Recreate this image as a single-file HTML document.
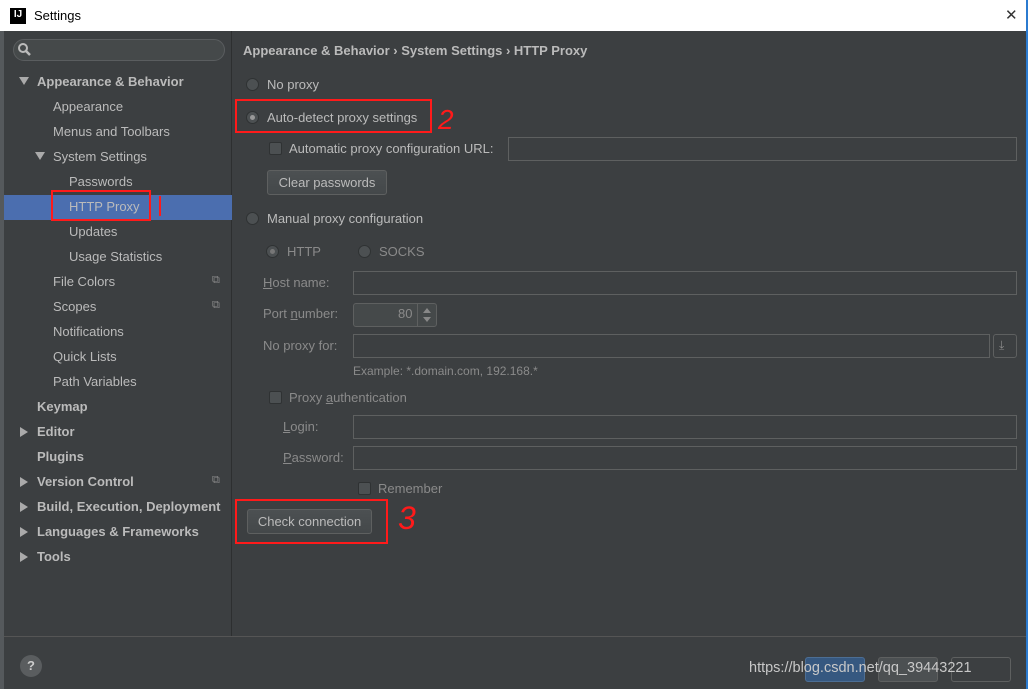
<!DOCTYPE html>
<html><head><meta charset="utf-8"><style>
*{box-sizing:border-box;margin:0;padding:0}
body{width:1028px;height:689px;background:#3c3f41;font-family:"Liberation Sans",sans-serif;font-size:13px;color:#bbbbbb;position:relative;overflow:hidden}
.a{position:absolute;white-space:nowrap}
.title{left:0;top:0;width:1028px;height:31px;background:#fff;border-right:2px solid #2b7bd0}
.side{left:4px;top:31px;width:228px;height:605px;background:#3c3f41;border-right:1px solid #2d2f30}
.main{left:233px;top:31px;width:793px;height:605px;background:#3c3f41}
.bot{left:4px;top:636px;width:1022px;height:53px;background:#3c3f41;border-top:1px solid #555}
.rb{position:absolute;right:0;top:0;width:2px;height:689px;background:#2b7bd0}
.lb{left:0;top:31px;width:4px;height:658px;background:#55595c}
.b{font-weight:bold}
.inp{position:absolute;border:1px solid #5e6060;background:#45494a;height:24px}
.radio{position:absolute;width:13px;height:13px;border-radius:50%;background:#4c5052;border:1px solid #2f3233}
.cb{position:absolute;width:13px;height:13px;background:#4c5052;border:1px solid #2f3233;border-radius:2px}
.btn{position:absolute;height:25px;border:1px solid #5e6060;border-radius:3px;background:linear-gradient(#4c5052,#44484a);color:#bbb;text-align:center;line-height:23px}
.red{position:absolute;border:2px solid #ff1a1a}
.tri{position:absolute;width:0;height:0}
.dim{color:#8a8a8a}
</style></head><body>
<div class="a title"></div>
<div class="a" style="left:10px;top:8px;width:16px;height:16px;background:#000;color:#fff;font-size:10px;font-weight:bold;text-align:center;line-height:14px">IJ</div>
<div class="a" style="left:34px;top:8px;color:#000;font-size:13px">Settings</div>
<div class="a" style="left:1005px;top:6px;color:#333;font-size:15px;font-weight:300">✕</div>
<div class="a lb"></div>
<div class="a side"></div>
<div class="a main"></div>
<div class="a bot"></div>
<div class="rb"></div>

<div class="a" style="left:13px;top:39px;width:212px;height:22px;border:1px solid #5a5d5f;border-radius:11px;background:#45494a"></div>
<svg class="a" style="left:17px;top:42px" width="16" height="16"><circle cx="6" cy="6" r="4" stroke="#bbb" stroke-width="2" fill="none"/><line x1="9" y1="9" x2="13" y2="13" stroke="#bbb" stroke-width="2.5"/></svg>

<div class="a" style="left:4px;top:195px;width:228px;height:25px;background:#4b6eaf"></div>
<div class="tri" style="left:19px;top:77px;border-left:5px solid transparent;border-right:5px solid transparent;border-top:8px solid #aaa"></div>
<div class="a b" style="left:37px;top:74px">Appearance &amp; Behavior</div>
<div class="a" style="left:53px;top:99px">Appearance</div>
<div class="a" style="left:53px;top:124px">Menus and Toolbars</div>
<div class="tri" style="left:35px;top:152px;border-left:5px solid transparent;border-right:5px solid transparent;border-top:8px solid #aaa"></div>
<div class="a" style="left:53px;top:149px">System Settings</div>
<div class="a" style="left:69px;top:174px">Passwords</div>
<div class="a" style="left:69px;top:199px">HTTP Proxy</div>
<div class="a" style="left:69px;top:224px">Updates</div>
<div class="a" style="left:69px;top:249px">Usage Statistics</div>
<div class="a" style="left:53px;top:274px">File Colors</div>
<div class="a" style="left:53px;top:299px">Scopes</div>
<div class="a" style="left:53px;top:324px">Notifications</div>
<div class="a" style="left:53px;top:349px">Quick Lists</div>
<div class="a" style="left:53px;top:374px">Path Variables</div>
<div class="a dim" style="left:212px;top:274px;font-size:11px">⧉</div>
<div class="a dim" style="left:212px;top:299px;font-size:11px">⧉</div>
<div class="a dim" style="left:212px;top:474px;font-size:11px">⧉</div>
<div class="a b" style="left:37px;top:399px">Keymap</div>
<div class="tri" style="left:20px;top:427px;border-top:5px solid transparent;border-bottom:5px solid transparent;border-left:8px solid #aaa"></div>
<div class="a b" style="left:37px;top:424px">Editor</div>
<div class="a b" style="left:37px;top:449px">Plugins</div>
<div class="tri" style="left:20px;top:477px;border-top:5px solid transparent;border-bottom:5px solid transparent;border-left:8px solid #aaa"></div>
<div class="a b" style="left:37px;top:474px">Version Control</div>
<div class="tri" style="left:20px;top:502px;border-top:5px solid transparent;border-bottom:5px solid transparent;border-left:8px solid #aaa"></div>
<div class="a b" style="left:37px;top:499px">Build, Execution, Deployment</div>
<div class="tri" style="left:20px;top:527px;border-top:5px solid transparent;border-bottom:5px solid transparent;border-left:8px solid #aaa"></div>
<div class="a b" style="left:37px;top:524px">Languages &amp; Frameworks</div>
<div class="tri" style="left:20px;top:552px;border-top:5px solid transparent;border-bottom:5px solid transparent;border-left:8px solid #aaa"></div>
<div class="a b" style="left:37px;top:549px">Tools</div>
<div class="red" style="left:51px;top:190px;width:100px;height:31px"></div>
<div class="a" style="left:159px;top:196px;width:2px;height:20px;background:#ff1a1a"></div>

<div class="a b" style="left:243px;top:43px">Appearance &amp; Behavior › System Settings › HTTP Proxy</div>
<div class="radio" style="left:246px;top:78px"></div><div class="a" style="left:267px;top:77px">No proxy</div>
<div class="radio" style="left:246px;top:111px"></div><div class="a" style="left:250px;top:115px;width:5px;height:5px;border-radius:50%;background:#999"></div>
<div class="a" style="left:267px;top:110px">Auto-detect proxy settings</div>
<div class="red" style="left:235px;top:99px;width:197px;height:34px"></div>
<div class="a" style="left:438px;top:104px;color:#ff1a1a;font-size:28px;font-style:italic">2</div>
<div class="cb" style="left:269px;top:142px"></div><div class="a" style="left:289px;top:141px">Automatic proxy configuration URL:</div>
<div class="inp" style="left:508px;top:137px;width:509px;background:#3c3f41"></div>
<div class="btn" style="left:267px;top:170px;width:120px">Clear passwords</div>
<div class="radio" style="left:246px;top:212px"></div><div class="a" style="left:267px;top:211px">Manual proxy configuration</div>

<div class="radio" style="left:266px;top:245px"></div><div class="a" style="left:270px;top:249px;width:5px;height:5px;border-radius:50%;background:#777"></div>
<div class="a dim" style="left:287px;top:244px">HTTP</div>
<div class="radio" style="left:358px;top:245px"></div><div class="a dim" style="left:379px;top:244px">SOCKS</div>
<div class="a dim" style="left:263px;top:275px"><u>H</u>ost name:</div>
<div class="inp" style="left:353px;top:271px;width:664px;background:#3c3f41"></div>
<div class="a dim" style="left:263px;top:306px">Port <u>n</u>umber:</div>
<div class="inp" style="left:353px;top:303px;width:84px;border-radius:3px"></div>
<div class="a dim" style="left:398px;top:306px">80</div>
<div class="a" style="left:417px;top:304px;width:1px;height:22px;background:#5e6060"></div>
<div class="tri" style="left:423px;top:308px;border-left:4px solid transparent;border-right:4px solid transparent;border-bottom:5px solid #888"></div>
<div class="tri" style="left:423px;top:317px;border-left:4px solid transparent;border-right:4px solid transparent;border-top:5px solid #888"></div>
<div class="a dim" style="left:263px;top:338px">No proxy for:</div>
<div class="inp" style="left:353px;top:334px;width:637px;background:#3c3f41"></div>
<div class="inp" style="left:993px;top:334px;width:24px;background:#3c3f41;border-radius:3px"></div>
<div class="a dim" style="left:999px;top:338px;font-size:12px">⤓</div>
<div class="a dim" style="left:353px;top:364px;font-size:12px">Example: *.domain.com, 192.168.*</div>
<div class="cb" style="left:269px;top:391px"></div><div class="a dim" style="left:289px;top:390px">Proxy <u>a</u>uthentication</div>
<div class="a dim" style="left:283px;top:419px"><u>L</u>ogin:</div>
<div class="inp" style="left:353px;top:415px;width:664px;background:#3c3f41"></div>
<div class="a dim" style="left:283px;top:450px"><u>P</u>assword:</div>
<div class="inp" style="left:353px;top:446px;width:664px;background:#3c3f41"></div>
<div class="cb" style="left:358px;top:482px"></div><div class="a dim" style="left:378px;top:481px">Remember</div>
<div class="btn" style="left:247px;top:509px;width:125px">Check connection</div>
<div class="red" style="left:235px;top:499px;width:153px;height:45px"></div>
<div class="a" style="left:398px;top:500px;color:#ff1a1a;font-size:32px;font-style:italic">3</div>

<div class="a" style="left:20px;top:655px;width:22px;height:22px;border-radius:50%;background:#5a5d5f;color:#ccc;font-weight:bold;text-align:center;line-height:22px">?</div>
<div class="a" style="left:805px;top:657px;width:60px;height:25px;background:#365880;border:1px solid #4c6e94;border-radius:3px"></div>
<div class="a" style="left:878px;top:657px;width:60px;height:25px;background:#4c5052;border:1px solid #5e6060;border-radius:3px"></div>
<div class="a" style="left:951px;top:657px;width:60px;height:25px;background:#3c3f41;border:1px solid #5e6060;border-radius:3px"></div>
<div class="a" style="left:749px;top:660px;color:#c8c8c8;font-size:14.5px">https://blog.csdn.net/qq_39443221</div>
</body></html>
